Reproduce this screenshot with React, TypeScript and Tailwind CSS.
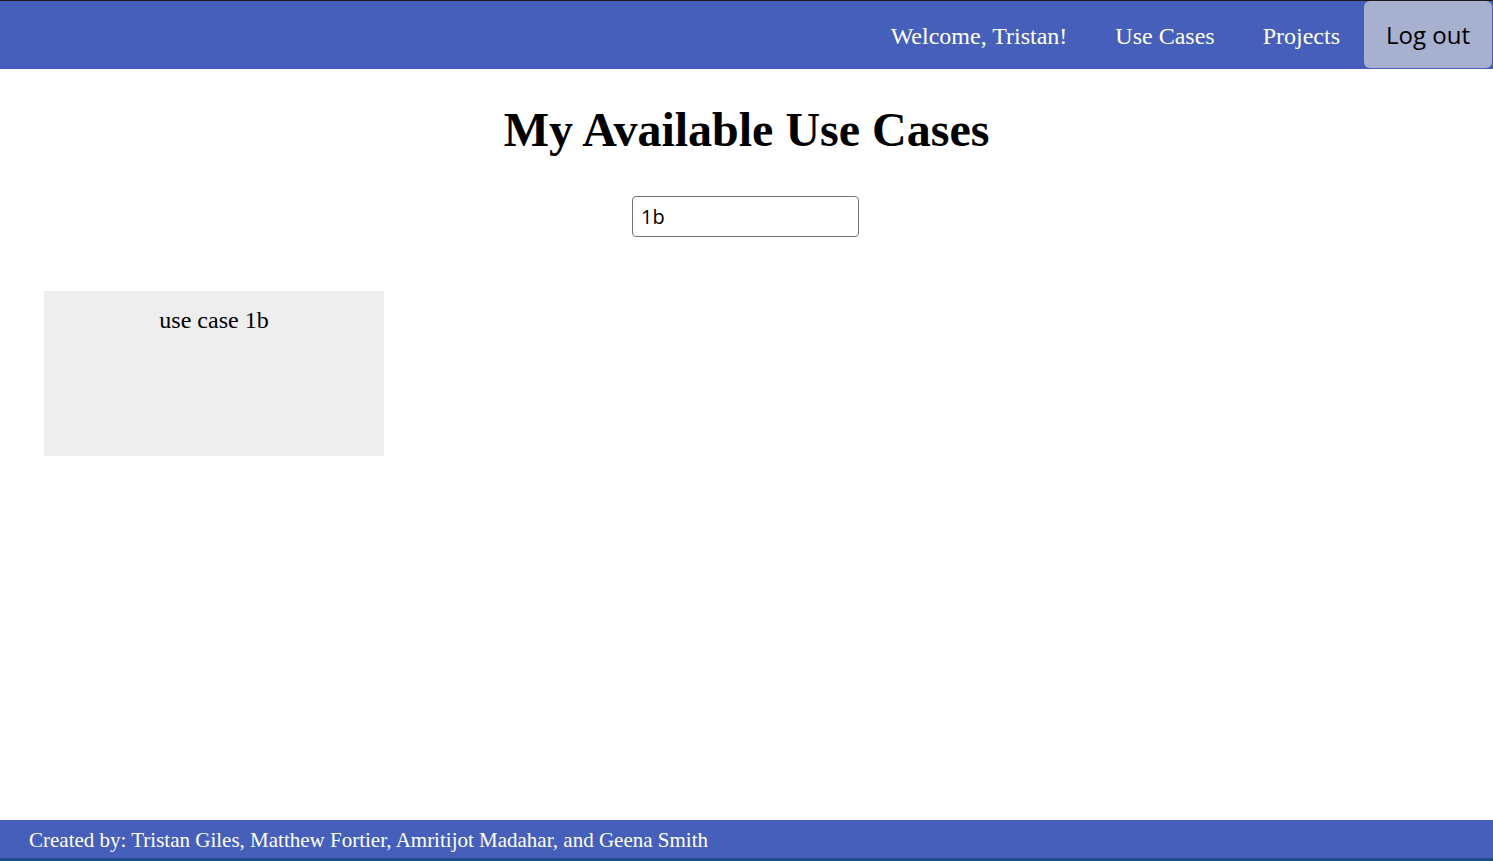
import { useState } from 'react';

export default function App() {
    const [query, setQuery] = useState('1b');
    const useCases = ['use case 1a', 'use case 1b', 'use case 2a'].filter((u) => u.includes(query));

    return (
        <div className="h-[861px] flex flex-col bg-white overflow-hidden font-['Liberation_Serif',serif]">
            {/* Nav bar */}
            <header className="border-t border-[#1a1a1a] bg-[#465fba] h-[69px] flex justify-end items-stretch">
                <nav className="flex items-center text-white text-[24px] pt-px">
                    <span className="px-6">Welcome, Tristan!</span>
                    <a className="px-6">Use Cases</a>
                    <a className="px-6">Projects</a>
                </nav>
                <button className="w-[128px] mb-px mr-px bg-[#a8b0cf] rounded-md text-black text-[24px] font-['Open_Sans',sans-serif]">
                    Log out
                </button>
            </header>

            <main className="flex-1">
                <h1 className="text-center text-[48px] font-bold mt-[32px] leading-[1.2]">My Available Use Cases</h1>
                <div className="flex justify-center mt-[37px]">
                    <input
                        autoFocus
                        value={query}
                        onChange={(e) => setQuery(e.target.value)}
                        className="w-[227px] h-[41px] -translate-x-px border border-[#767676] rounded-[4px] px-2 text-[20px] font-['Open_Sans',sans-serif] outline-none caret-black"
                    />
                </div>
                <div className="flex flex-wrap gap-6 px-[44px] mt-[54px]">
                    {useCases.map((u) => (
                        <div key={u} className="w-[340px] h-[165px] bg-[#eeeeee] text-center text-[24px] pt-[11px]">
                            {u}
                        </div>
                    ))}
                </div>
            </main>

            <footer className="bg-[#465fba] h-[38px] flex items-center px-[29px] pt-[3px] text-white text-[21px]">
                Created by: Tristan Giles, Matthew Fortier, Amritijot Madahar, and Geena Smith
            </footer>
            <div className="h-[3px] bg-[#1d4f86]" />
        </div>
    );
}
